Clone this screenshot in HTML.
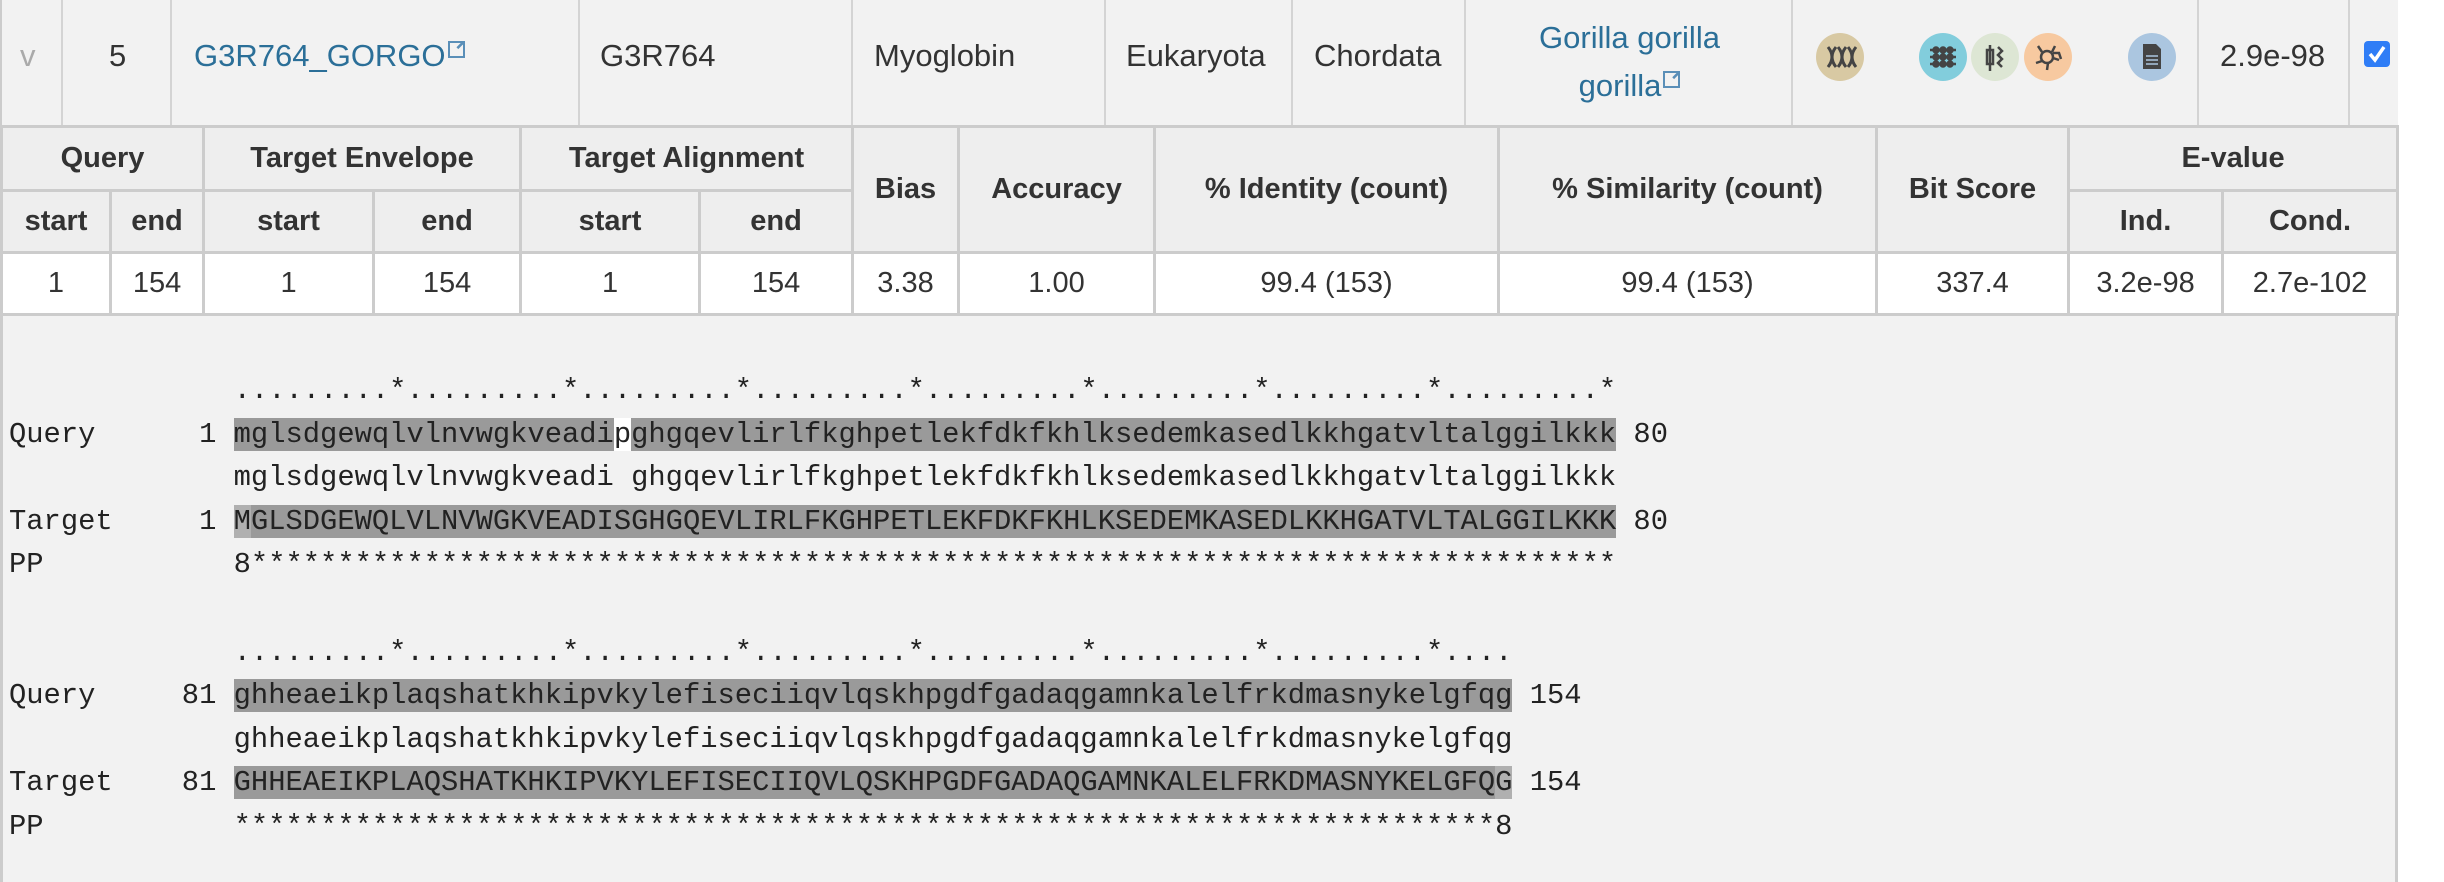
<!DOCTYPE html>
<html><head><meta charset="utf-8">
<style>
*{margin:0;padding:0;box-sizing:border-box}
body{width:2444px;height:882px;background:#fff;font-family:"Liberation Sans",sans-serif;color:#333;position:relative;overflow:hidden}
.top{position:absolute;left:0;top:0;width:2398px;height:125px;background:#f2f2f2;border-left:2px solid #ccc}
.vl{position:absolute;top:0;width:2px;height:125px;background:#d4d4d4}
.t{position:absolute;font-size:31px;line-height:36px;white-space:nowrap}
a{color:#2b6f98;text-decoration:none}
.ext{display:inline-block;width:17px;height:17px;border:2px solid #5a8fb8;margin-left:2px;vertical-align:8px;position:relative}
.ext:after{content:"";position:absolute;right:-2px;top:-2px;width:9px;height:9px;background:#5a8fb8;clip-path:polygon(40% 0,100% 0,100% 60%,80% 40%,30% 90%,10% 70%,60% 20%)}
table{position:absolute;left:0;top:125px;border-collapse:collapse;width:2396px;font-size:29px;table-layout:fixed}
th,td{border:3px solid #ccc;text-align:center;height:62px;padding:0}
th{background:#eee;font-weight:bold}
td{background:#fff;font-weight:normal}
.aln{position:absolute;left:0;top:316px;width:2398px;height:566px;background:#f2f2f2;border-left:3px solid #ccc;border-right:3px solid #ccc}
pre{position:absolute;left:6px;top:53px;font-family:"Liberation Mono",monospace;font-size:28.8px;line-height:43.6px;color:#222}
.h{background:#9a9a9a}.l{background:#b0b0b0}.w{background:#fff}
</style></head><body>
<div class="top">
<div class="vl" style="left:59px"></div><div class="vl" style="left:168px"></div><div class="vl" style="left:576px"></div><div class="vl" style="left:849px"></div><div class="vl" style="left:1102px"></div><div class="vl" style="left:1289px"></div><div class="vl" style="left:1462px"></div><div class="vl" style="left:1789px"></div><div class="vl" style="left:2195px"></div><div class="vl" style="left:2346px"></div>
<div class="t" style="left:18px;top:38px;color:#aaa">v</div>
<div class="t" style="left:107px;top:38px">5</div>
<div class="t" style="left:192px;top:38px"><a>G3R764_GORGO<span class="ext"></span></a></div>
<div class="t" style="left:598px;top:38px">G3R764</div>
<div class="t" style="left:872px;top:38px">Myoglobin</div>
<div class="t" style="left:1124px;top:38px">Eukaryota</div>
<div class="t" style="left:1312px;top:38px">Chordata</div>
<div class="t" style="left:1464px;width:327px;top:14px;text-align:center;line-height:48px"><a>Gorilla gorilla<br>gorilla<span class="ext"></span></a></div>
<svg style="position:absolute;left:0;top:0" width="2398" height="125">
<circle cx="1838" cy="57" r="24" fill="#d8c9a3"/>
<g stroke="#444" stroke-width="3" fill="none"><path d="M1826 47q8 10 0 20M1834 47q-8 10 0 20M1836 47q8 10 0 20M1844 47q-8 10 0 20M1846 47q8 10 0 20M1854 47q-8 10 0 20"/></g>
<circle cx="1941" cy="57" r="24" fill="#82cddc"/>
<g stroke="#444" stroke-width="2.5" fill="#444"><path d="M1928 50h26M1928 57h26M1928 64h26" fill="none"/><circle cx="1934" cy="50" r="2.5"/><circle cx="1941" cy="50" r="2.5"/><circle cx="1948" cy="50" r="2.5"/><circle cx="1934" cy="57" r="2.5"/><circle cx="1941" cy="57" r="2.5"/><circle cx="1948" cy="57" r="2.5"/><circle cx="1934" cy="64" r="2.5"/><circle cx="1941" cy="64" r="2.5"/><circle cx="1948" cy="64" r="2.5"/></g>
<circle cx="1993" cy="57" r="24" fill="#dde6d4"/>
<g stroke="#444" stroke-width="2.5" fill="none"><path d="M1988 45v26M1985 50h6v14h-6zM1996 47l4 4-4 4 4 4-4 4 4 4"/></g>
<circle cx="2046" cy="57" r="24" fill="#f7c9a0"/>
<g stroke="#444" stroke-width="2.5" fill="none"><circle cx="2045" cy="57" r="6"/><path d="M2040 52l-4-6M2050 52l3-6M2051 58l6 2M2040 61l-6 2M2046 63l-1 7M2051 53h6l2 6"/></g>
<circle cx="2150" cy="57" r="24" fill="#abc6e0"/>
<path d="M2141 44h13l5 5v20h-18z" fill="#444"/><path d="M2144 56h12M2144 60h12M2144 64h12" stroke="#abc6e0" stroke-width="1.5"/>
<rect x="2362" y="41" width="26" height="26" rx="4" fill="#2f7df6"/><path d="M2368 54l5 6 9-13" stroke="#fff" stroke-width="3.5" fill="none"/>
</svg>
<div class="t" style="left:2218px;top:38px">2.9e-98</div>
</div>
<table>
<colgroup><col style="width:109px"><col style="width:93px"><col style="width:170px"><col style="width:147px"><col style="width:179px"><col style="width:153px"><col style="width:106px"><col style="width:196px"><col style="width:344px"><col style="width:378px"><col style="width:192px"><col style="width:154px"><col style="width:175px"></colgroup>
<tr><th colspan="2" style="height:64px">Query</th><th colspan="2">Target Envelope</th><th colspan="2">Target Alignment</th><th rowspan="2">Bias</th><th rowspan="2">Accuracy</th><th rowspan="2">% Identity (count)</th><th rowspan="2">% Similarity (count)</th><th rowspan="2">Bit Score</th><th colspan="2">E-value</th></tr>
<tr><th>start</th><th>end</th><th>start</th><th>end</th><th>start</th><th>end</th><th>Ind.</th><th>Cond.</th></tr>
<tr><td>1</td><td>154</td><td>1</td><td>154</td><td>1</td><td>154</td><td>3.38</td><td>1.00</td><td>99.4 (153)</td><td>99.4 (153)</td><td>337.4</td><td>3.2e-98</td><td>2.7e-102</td></tr>
</table>
<div class="aln"><pre>             .........*.........*.........*.........*.........*.........*.........*.........*
Query      1 <span class="h">mglsdgewqlvlnvwgkveadi</span><span class="w">p</span><span class="h">ghgqevlirlfkghpetlekfdkfkhlksedemkasedlkkhgatvltalggilkkk</span> 80
             mglsdgewqlvlnvwgkveadi ghgqevlirlfkghpetlekfdkfkhlksedemkasedlkkhgatvltalggilkkk
Target     1 <span class="l">M</span><span class="h">GLSDGEWQLVLNVWGKVEADISGHGQEVLIRLFKGHPETLEKFDKFKHLKSEDEMKASEDLKKHGATVLTALGGILKKK</span> 80
PP           8*******************************************************************************

             .........*.........*.........*.........*.........*.........*.........*....
Query     81 <span class="h">ghheaeikplaqshatkhkipvkylefiseciiqvlqskhpgdfgadaqgamnkalelfrkdmasnykelgfqg</span> 154
             ghheaeikplaqshatkhkipvkylefiseciiqvlqskhpgdfgadaqgamnkalelfrkdmasnykelgfqg
Target    81 <span class="h">GHHEAEIKPLAQSHATKHKIPVKYLEFISECIIQVLQSKHPGDFGADAQGAMNKALELFRKDMASNYKELGFQ</span><span class="l">G</span> 154
PP           *************************************************************************8</pre></div>
</body></html>
